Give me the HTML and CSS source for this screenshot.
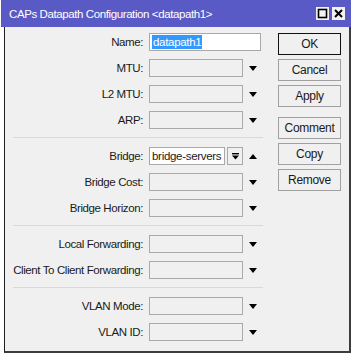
FILE: index.html
```html
<!DOCTYPE html>
<html lang="en">
<head>
<meta charset="UTF-8" />
<title>CAPs Datapath Configuration</title>
<link rel="stylesheet" href="styles.css">
</head>
<body>

<div class="window">
  <!-- Title bar -->
  <div class="titlebar">
    <span class="title">CAPs Datapath Configuration &lt;datapath1&gt;</span>
    <div class="tb-btns">
      <span class="tb-btn">
        <svg viewBox="0 0 13 13" width="13" height="13"><rect x="2.5" y="2.5" width="8" height="8" fill="none" stroke="#000" stroke-width="1.6"/></svg>
      </span>
      <span class="tb-btn">
        <svg viewBox="0 0 13 13" width="13" height="13"><path d="M3 3 L10 10 M10 3 L3 10" stroke="#000" stroke-width="2"/></svg>
      </span>
    </div>
  </div>

  <div class="client">
    <div class="form">
      <div class="row">
        <span class="label">Name:</span>
        <div class="field white name"><span class="sel">datapath1</span></div>
      </div>
      <div class="row">
        <span class="label">MTU:</span>
        <div class="field"></div>
        <span class="tri down"></span>
      </div>
      <div class="row">
        <span class="label">L2 MTU:</span>
        <div class="field"></div>
        <span class="tri down"></span>
      </div>
      <div class="row">
        <span class="label">ARP:</span>
        <div class="field"></div>
        <span class="tri down"></span>
      </div>

      <div class="sep"></div>

      <div class="row">
        <span class="label">Bridge:</span>
        <div class="field white short">bridge-servers</div>
        <span class="drop-btn">
          <svg viewBox="0 0 9 9" width="9" height="9"><rect x="1" y="1" width="7" height="1.4" fill="#000"/><path d="M1 3.5 H8 L4.5 7.5 Z" fill="#000"/></svg>
        </span>
        <span class="tri up"></span>
      </div>
      <div class="row">
        <span class="label">Bridge Cost:</span>
        <div class="field"></div>
        <span class="tri down"></span>
      </div>
      <div class="row">
        <span class="label">Bridge Horizon:</span>
        <div class="field"></div>
        <span class="tri down"></span>
      </div>

      <div class="sep"></div>

      <div class="row">
        <span class="label">Local Forwarding:</span>
        <div class="field"></div>
        <span class="tri down"></span>
      </div>
      <div class="row">
        <span class="label">Client To Client Forwarding:</span>
        <div class="field"></div>
        <span class="tri down"></span>
      </div>

      <div class="sep"></div>

      <div class="row">
        <span class="label">VLAN Mode:</span>
        <div class="field"></div>
        <span class="tri down"></span>
      </div>
      <div class="row">
        <span class="label">VLAN ID:</span>
        <div class="field"></div>
        <span class="tri down"></span>
      </div>
    </div>

    <!-- Botones -->
    <div class="buttons">
      <button class="btn default">OK</button>
      <button class="btn">Cancel</button>
      <button class="btn">Apply</button>
      <button class="btn spaced">Comment</button>
      <button class="btn">Copy</button>
      <button class="btn">Remove</button>
    </div>
  </div>
</div>

</body>
</html>
```

FILE: styles.css
```css
* {
  margin: 0;
  padding: 0;
  box-sizing: border-box;
}

body {
  background: #ffffff;
  font-family: 'Liberation Sans', Arial, sans-serif;
  font-size: 11.5px;
  color: #1a1a1a;
}

.window {
  width: 350px;
  margin-left: 1px;
}

/* Barra de título */
.titlebar {
  height: 27px;
  background: #5a5ac6;
  color: #ffffff;
  display: flex;
  align-items: center;
  padding-left: 8px;
  padding-right: 6px;
}
.title {
  font-size: 11.5px;
  letter-spacing: -0.4px;
  flex: 1;
}
.tb-btns {
  display: flex;
  gap: 3px;
}
.tb-btn {
  width: 13px;
  height: 13px;
  background: #f2f2f2;
  display: flex;
}

/* Contenido */
.client {
  margin-left: 3px;
  height: 326px;
  background: #f0f0f0;
  border-left: 1px solid #1e1e1e;
  border-right: 2px solid #3c3c3c;
  border-bottom: 2px solid #3c3c3c;
  display: flex;
  padding-top: 2px;
}

.form {
  width: 263px;
}

.row {
  height: 26px;
  display: flex;
  align-items: center;
}
.label {
  width: 138px;
  text-align: right;
  letter-spacing: -0.4px;
  white-space: nowrap;
  margin-right: 6px;
}

.field {
  width: 94px;
  height: 18px;
  border: 1px solid #a9a9a9;
  background: #f0f0f0;
  display: flex;
  align-items: center;
  padding-left: 2px;
  letter-spacing: -0.3px;
}
.field.white {
  background: #ffffff;
}
.field.name {
  width: 112px;
}
.field.short {
  width: 76px;
}
.sel {
  background: #3399ff;
  color: #ffffff;
  padding: 0 1px;
  line-height: 14px;
}

.drop-btn {
  width: 16px;
  height: 18px;
  margin-left: 2px;
  border: 1px solid #a9a9a9;
  background: #f0f0f0;
  display: flex;
  align-items: center;
  justify-content: center;
}

.tri {
  width: 0;
  height: 0;
  margin-left: 6px;
  border-left: 4.5px solid transparent;
  border-right: 4.5px solid transparent;
}
.tri.down {
  border-top: 5px solid #000;
}
.tri.up {
  border-bottom: 5px solid #000;
}

.sep {
  height: 10px;
  margin-left: 8px;
  width: 250px;
  padding-top: 4px;
}
.sep::before {
  content: "";
  display: block;
  height: 1px;
  background: #d9d9d9;
}

/* Botones */
.buttons {
  margin-left: 10px;
  padding-top: 4px;
  display: flex;
  flex-direction: column;
  gap: 4px;
}
.btn {
  width: 63px;
  height: 22px;
  font-family: 'Liberation Sans', Arial, sans-serif;
  font-size: 12px;
  letter-spacing: -0.3px;
  color: #1a1a1a;
  background: #f0f0f0;
  border: 1px solid #a0a0a0;
}
.btn.default {
  border: 1px solid #111;
}
.btn.spaced {
  margin-top: 6px;
}
```
